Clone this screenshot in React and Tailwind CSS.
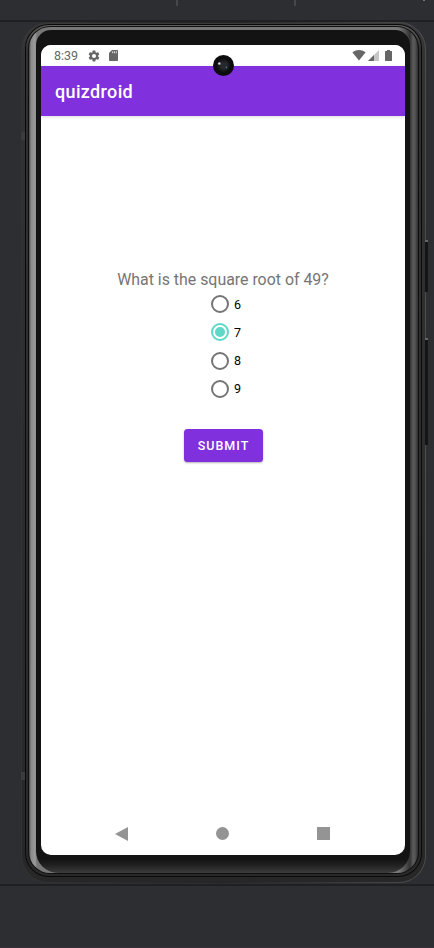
import React from "react";

function StatusBar() {
  return (
    <div className="flex h-[21px] items-center bg-white pl-[13px] pr-[13px] text-[#666]">
      <span className="relative top-[0.5px] w-[34px] text-[12.5px] leading-none">8:39</span>
      <svg className="h-[12px] w-[12px]" viewBox="1.5 1.5 21 21" fill="#666">
        <path d="M19.14 12.94c.04-.3.06-.61.06-.94 0-.32-.02-.64-.07-.94l2.03-1.58c.18-.14.23-.41.12-.61l-1.92-3.32c-.12-.22-.37-.29-.59-.22l-2.39.96c-.5-.38-1.03-.7-1.62-.94L14.4 2.81c-.04-.24-.24-.41-.48-.41h-3.84c-.24 0-.43.17-.47.41L9.25 5.35c-.59.24-1.13.57-1.62.94l-2.39-.96c-.22-.08-.47 0-.59.22L2.74 8.87c-.12.21-.08.47.12.61l2.03 1.58c-.05.3-.09.63-.09.94s.02.64.07.94l-2.03 1.58c-.18.14-.23.41-.12.61l1.92 3.32c.12.22.37.29.59.22l2.39-.96c.5.38 1.03.7 1.62.94l.36 2.54c.05.24.24.41.48.41h3.84c.24 0 .44-.17.47-.41l.36-2.54c.59-.24 1.13-.56 1.62-.94l2.39.96c.22.08.47 0 .59-.22l1.92-3.32c.12-.22.07-.47-.12-.61l-2.01-1.58zM12 15.6A3.6 3.6 0 1 1 12 8.4a3.6 3.6 0 0 1 0 7.2z" />
      </svg>
      <svg className="ml-[9px] h-[11px] w-[9px]" viewBox="0 0 9 11" fill="#666">
        <path d="M3 0H8.2Q9 0 9 .8V10.2Q9 11 8.2 11H.8Q0 11 0 10.2V3Z" />
        <path d="M3.2 1.3h1v2h-1zM5 1.3h1v2H5zM6.8 1.3h1v2h-1z" fill="#ddd" />
      </svg>
      <svg className="ml-auto h-[11px] w-[14px]" viewBox="0 0 14 11" fill="#666">
        <path d="M.3 2.2Q7-2.2 13.7 2.2L7 10.6Z" />
      </svg>
      <svg className="ml-[2px] h-[11px] w-[11px]" viewBox="0 0 11 11">
        <path d="M11 0V11H0Z" fill="#c6c6c6" />
        <path d="M6 5V11H0Z" fill="#666" />
      </svg>
      <svg className="ml-[6px] h-[11px] w-[7px]" viewBox="0 0 7 11" fill="#666">
        <path d="M2 0H5V1H6.4Q7 1 7 1.6V10.4Q7 11 6.4 11H.6Q0 11 0 10.4V1.6Q0 1 .6 1H2Z" />
      </svg>
    </div>
  );
}

function Camera() {
  return (
    <svg className="absolute left-[213px] top-[55px] h-[21px] w-[21px]" viewBox="0 0 21 21">
      <circle cx="10.5" cy="10.5" r="10.5" fill="#0d0d0d" />
      <circle cx="10.5" cy="10.5" r="6.2" fill="#1a1b1d" />
      <circle cx="11" cy="10.5" r="4" fill="#26282c" />
      <circle cx="6.4" cy="8.6" r="1.5" fill="#888" />
      <circle cx="6.2" cy="8.5" r=".7" fill="#fff" />
      <circle cx="13.4" cy="12.4" r=".8" fill="#4f72ac" />
    </svg>
  );
}

function Option({ label, checked }) {
  return (
    <label className="flex h-[28.3px] items-center">
      <span className={`flex size-[18px] items-center justify-center rounded-full border-2 ${checked ? "border-[#5fd8c8]" : "border-[#757575]"}`}>
        {checked && <span className="size-[10px] rounded-full bg-[#5fd8c8]" />}
      </span>
      <span className="relative top-[0.7px] ml-[5px] text-[12.5px] leading-none text-black">{label}</span>
    </label>
  );
}

function Screen() {
  return (
    <div className="flex h-[810px] w-[364px] flex-col overflow-hidden rounded-[10px] bg-white">
      <StatusBar />
      <header className="flex h-[50px] shrink-0 items-center bg-[#8031dd] pl-[14px] pt-px text-[18px] font-medium tracking-[0.35px] text-white shadow-[0_1px_3px_rgba(0,0,0,0.15)]">
        quizdroid
      </header>
      <main className="flex flex-1 flex-col items-center pt-[154px]">
        <p className="h-[20px] whitespace-nowrap text-[15.9px] leading-[20px] text-[#757575]">What is the square root of 49?</p>
        <div className="flex flex-col pl-[6px]">
          <Option label="6" />
          <Option label="7" checked />
          <Option label="8" />
          <Option label="9" />
        </div>
        <button className="mt-[26.2px] h-[32.5px] w-[79px] rounded-[3.5px] bg-[#8031dd] pt-[1.5px] pl-[1px] text-[12.5px] font-medium tracking-[1px] text-white shadow-[0_1px_2px_rgba(0,0,0,0.3)]">
          SUBMIT
        </button>
      </main>
      <nav className="flex h-[43px] items-center justify-between pl-[74px] pr-[75px]">
        <svg className="h-[14px] w-[13px]" viewBox="0 0 13 14"><path d="M0 7L13 0V14Z" fill="#949494" /></svg>
        <span className="size-[13px] rounded-full bg-[#949494]" />
        <span className="size-[13px] bg-[#949494]" />
      </nav>
    </div>
  );
}

export default function App() {
  return (
    <div className="relative flex h-[948px] w-[434px] flex-col overflow-hidden bg-[#2d2e32] font-[Roboto,sans-serif]">
      <div className="flex h-[22px] shrink-0 items-start border-b-2 border-[#1f2023]">
        <span className="ml-[176px] h-[6px] w-[2px] bg-[#46474b]" />
        <span className="ml-[116px] h-[6px] w-[2px] bg-[#46474b]" />
        <span className="ml-[127px] h-[1px] w-[2px] bg-[#77787b]" />
      </div>
      <div className="flex h-[861px] shrink-0 pl-[21px]">
        <div className="h-[861px] w-[405px] rounded-[27px] bg-linear-to-r from-[#333] via-[#242424] to-[#4c4c4c] p-[1px]">
          <div className="h-[859px] w-[403px] rounded-[26px] bg-linear-to-b from-[#3a3a3a] via-[#323232] via-4% to-[#272727] px-[3px] pt-[1px] pb-[5px]">
            <div className="h-[853px] w-[397px] rounded-[24px] bg-[#0a0a0a] px-[1px] py-[1px]">
              <div className="h-[851px] w-[395px] rounded-[23px] bg-linear-to-b from-[#606060] via-[#303030] via-3% to-[#292929] px-[2px] pt-[1px] pb-[2px]">
                <div className="h-[848px] w-[391px] rounded-[22px] bg-[#101010] px-[1px] pt-[1px] pb-[1px]">
                  <div className="flex h-[846px] w-[389px] rounded-[21px] bg-[linear-gradient(to_right,#444_0px,#8a8a8a_2px,#9a9a9a_6px,#777_8px,#777_370px,#333_381px,#5a5a5a_384px,#555_386px,#2c2c2c_389px)] pt-[3px] pr-[8px] pl-[7px]">
                    <div className="h-[843px] w-[374px] rounded-t-[15px] rounded-b-[22px] bg-[linear-gradient(to_bottom,#131313_0px,#131313_829px,#202020_835px,#3c3c3c_843px)] pt-[15px] pl-[5px]">
                      <Screen />
                    </div>
                  </div>
                </div>
              </div>
            </div>
          </div>
        </div>
      </div>
      <div className="mt-px h-[2px] shrink-0 bg-[#1f2023]" />
      <div className="flex-1" />
      <div className="h-px bg-[#3a303b]" />
      <span className="absolute left-[425px] top-[240px] h-[52px] w-[3px] border-t-2 border-[#666] bg-[#151515]" />
      <span className="absolute left-[425px] top-[338px] h-[107px] w-[3px] border-t-2 border-[#666] bg-[#151515]" />
      <span className="absolute left-[21px] top-[132px] h-[8px] w-[4px] bg-[#3c3c3c]" />
      <span className="absolute left-[21px] top-[772px] h-[8px] w-[4px] bg-[#3c3c3c]" />
      <Camera />
    </div>
  );
}
